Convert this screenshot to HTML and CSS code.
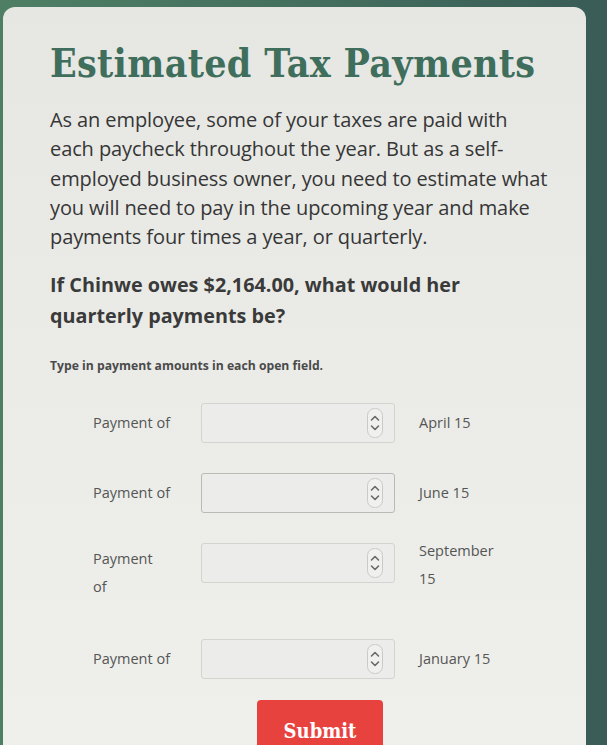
FILE: index.html
```html
<!DOCTYPE html>
<html lang="en">
<head>
<meta charset="utf-8">
<title>Estimated Tax Payments</title>
<link rel="stylesheet" href="styles.css">
</head>
<body>
<main class="card">
  <h1 class="title">Estimated Tax Payments</h1>
  <p class="intro">As an employee, some of your taxes are paid with<br>each paycheck throughout the year. But as a self-<br>employed business owner, you need to estimate what<br>you will need to pay in the upcoming year and make<br>payments four times a year, or quarterly.</p>
  <p class="question">If Chinwe owes $2,164.00, what would her<br>quarterly payments be?</p>
  <p class="hint">Type in payment amounts in each open field.</p>
  <form class="payments">
    <div class="row">
      <label class="label" for="p1">Payment of</label>
      <div class="field"><input id="p1" class="input" type="text"><span class="spin"><svg viewBox="0 0 16 30" width="16" height="30"><rect x="0.5" y="0.5" width="15" height="29" rx="7" class="spin-bg"/><path d="M4.5 12 L8 8.5 L11.5 12" class="chev"/><path d="M4.5 18 L8 21.5 L11.5 18" class="chev"/></svg></span></div>
      <span class="date">April 15</span>
    </div>
    <div class="row">
      <label class="label" for="p2">Payment of</label>
      <div class="field field-focus"><input id="p2" class="input" type="text"><span class="spin"><svg viewBox="0 0 16 30" width="16" height="30"><rect x="0.5" y="0.5" width="15" height="29" rx="7" class="spin-bg"/><path d="M4.5 12 L8 8.5 L11.5 12" class="chev"/><path d="M4.5 18 L8 21.5 L11.5 18" class="chev"/></svg></span></div>
      <span class="date">June 15</span>
    </div>
    <div class="row row-tall">
      <label class="label" for="p3">Payment<br>of</label>
      <div class="field"><input id="p3" class="input" type="text"><span class="spin"><svg viewBox="0 0 16 30" width="16" height="30"><rect x="0.5" y="0.5" width="15" height="29" rx="7" class="spin-bg"/><path d="M4.5 12 L8 8.5 L11.5 12" class="chev"/><path d="M4.5 18 L8 21.5 L11.5 18" class="chev"/></svg></span></div>
      <span class="date">September<br>15</span>
    </div>
    <div class="row">
      <label class="label" for="p4">Payment of</label>
      <div class="field field-wide"><input id="p4" class="input" type="text"><span class="spin"><svg viewBox="0 0 16 30" width="16" height="30"><rect x="0.5" y="0.5" width="15" height="29" rx="7" class="spin-bg"/><path d="M4.5 12 L8 8.5 L11.5 12" class="chev"/><path d="M4.5 18 L8 21.5 L11.5 18" class="chev"/></svg></span></div>
      <span class="date">January 15</span>
    </div>
    <div class="actions">
      <button type="button" class="submit">Submit</button>
    </div>
  </form>
</main>
</body>
</html>
```

FILE: styles.css
```css
html, body {
  margin: 0;
  padding: 0;
  height: 100%;
  overflow: hidden;
}
body {
  background: linear-gradient(90deg, #4e7f64 0%, #446f5e 50%, #395c56 100%);
  font-family: "Open Sans", "Noto Sans", sans-serif;
}
.card {
  margin: 7px 21px 0 3px;
  min-height: 760px;
  border-radius: 12px 12px 0 0;
  background: linear-gradient(180deg, #e6e7e3 0%, #ebece8 50%, #eff0ec 100%);
  padding: 28px 30px 0 47px;
  box-sizing: border-box;
}
.title {
  margin: 0;
  font-family: "DejaVu Serif Condensed", "DejaVu Serif", serif;
  font-weight: bold;
  font-size: 39px;
  line-height: 56px;
  color: #3f6e5c;
  letter-spacing: 0.3px;
}
.intro {
  margin: 14px 0 0;
  font-size: 20px;
  line-height: 29.3px;
  color: #363636;
  letter-spacing: -0.1px;
}
.question {
  margin: 18px 0 0;
  font-size: 19.8px;
  line-height: 31px;
  font-weight: bold;
  color: #3a3a3a;
}
.hint {
  margin: 26px 0 0;
  font-size: 12.2px;
  line-height: 18px;
  font-weight: bold;
  color: #4a4a4a;
}
.payments {
  margin: 28px 0 0 43px;
  display: flex;
  flex-direction: column;
}
.row {
  display: grid;
  grid-template-columns: 84px 194px auto;
  column-gap: 24px;
  align-items: center;
  height: 40px;
  margin-bottom: 30px;
}
.row-tall {
  height: 44px;
  align-items: start;
  margin-bottom: 52px;
}
.label, .date {
  font-size: 14.5px;
  line-height: 28px;
  color: #555;
}
.row-tall .label { margin-top: 2px; }
.row-tall .date { margin-top: -6px; }
.field {
  display: flex;
  align-items: center;
  height: 40px;
  box-sizing: border-box;
  border: 1px solid #d3d4d0;
  border-radius: 3px;
  background: #ecedea;
  padding-right: 11px;
}
.field-focus {
  border-color: #b9bab6;
}
.input {
  flex: 1;
  min-width: 0;
  border: 0;
  background: transparent;
  outline: none;
  height: 100%;
}
.spin {
  display: flex;
}
.spin-bg {
  fill: #f0f1ee;
  stroke: #c9cac6;
  stroke-width: 1;
}
.chev {
  fill: none;
  stroke: #6a6a6a;
  stroke-width: 1.6;
  stroke-linecap: round;
  stroke-linejoin: round;
}
.actions {
  display: flex;
  padding-left: 164px;
  margin-top: -9px;
}
.submit {
  width: 126px;
  height: 62px;
  border: 0;
  border-radius: 4px 4px 0 0;
  background: #e8423f;
  color: #fff;
  font-family: "DejaVu Serif Condensed", "DejaVu Serif", serif;
  font-weight: bold;
  font-size: 20px;
  padding: 0;
}
```
